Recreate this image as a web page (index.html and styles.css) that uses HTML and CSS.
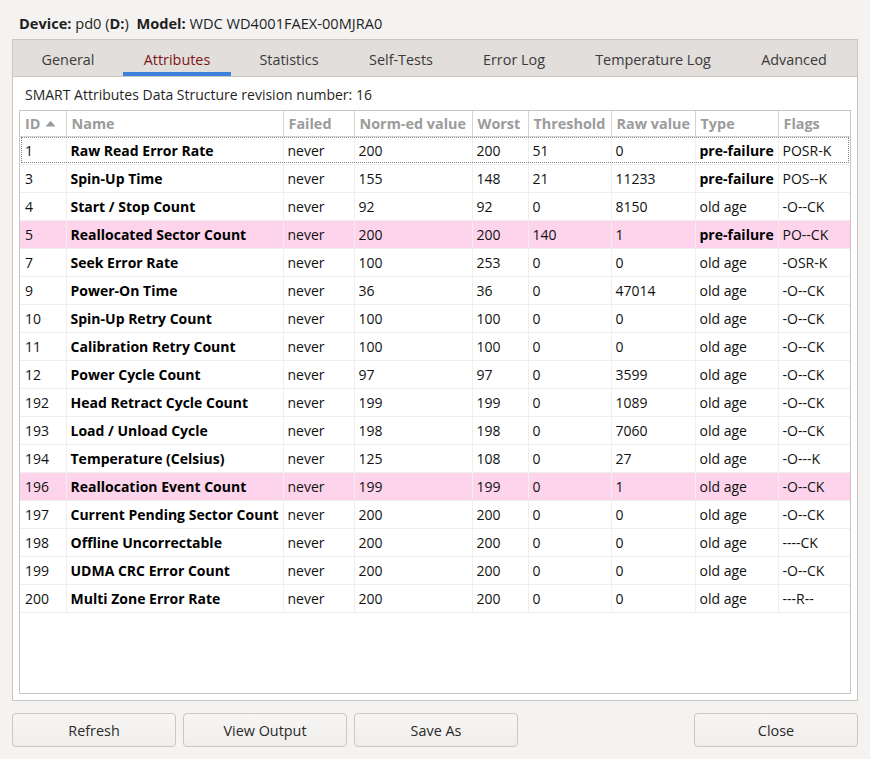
FILE: index.html
```html
<!DOCTYPE html>
<html>
<head>
<meta charset="utf-8">
<link rel="stylesheet" href="styles.css">
</head>
<body>
<div class="window">
  <div class="devline"><b>Device:</b> pd0 (<b>D:</b>)&nbsp; <b>Model:</b> WDC WD4001FAEX-00MJRA0</div>
  <div class="notebook">
    <div class="tabs">
      <div class="tab t1">General</div>
      <div class="tab t2 active">Attributes</div>
      <div class="tab t3">Statistics</div>
      <div class="tab t4">Self-Tests</div>
      <div class="tab t5">Error Log</div>
      <div class="tab t6">Temperature Log</div>
      <div class="tab t7">Advanced</div>
    </div>
    <div class="page">
      <div class="revision">SMART Attributes Data Structure revision number: 16</div>
      <div class="tablebox">
        <table class="attrs">
          <colgroup>
            <col class="c-id"><col class="c-name"><col class="c-failed"><col class="c-norm"><col class="c-worst"><col class="c-thr"><col class="c-raw"><col class="c-type"><col class="c-flags">
          </colgroup>
          <thead>
            <tr><th>ID <svg class="sort" width="11" height="7" viewBox="0 0 11 7"><path d="M0.5 6.5 L5.5 0.8 L10.5 6.5 Z" fill="#9b9b9b"/></svg></th><th>Name</th><th>Failed</th><th>Norm-ed value</th><th>Worst</th><th>Threshold</th><th>Raw value</th><th>Type</th><th>Flags</th></tr>
          </thead>
          <tbody>
            <tr class="focus"><td>1</td><td class="nm">Raw Read Error Rate</td><td>never</td><td>200</td><td>200</td><td>51</td><td>0</td><td class="pf">pre-failure</td><td>POSR-K</td></tr>
            <tr><td>3</td><td class="nm">Spin-Up Time</td><td>never</td><td>155</td><td>148</td><td>21</td><td>11233</td><td class="pf">pre-failure</td><td>POS--K</td></tr>
            <tr><td>4</td><td class="nm">Start / Stop Count</td><td>never</td><td>92</td><td>92</td><td>0</td><td>8150</td><td>old age</td><td>-O--CK</td></tr>
            <tr class="warn"><td>5</td><td class="nm">Reallocated Sector Count</td><td>never</td><td>200</td><td>200</td><td>140</td><td>1</td><td class="pf">pre-failure</td><td>PO--CK</td></tr>
            <tr><td>7</td><td class="nm">Seek Error Rate</td><td>never</td><td>100</td><td>253</td><td>0</td><td>0</td><td>old age</td><td>-OSR-K</td></tr>
            <tr><td>9</td><td class="nm">Power-On Time</td><td>never</td><td>36</td><td>36</td><td>0</td><td>47014</td><td>old age</td><td>-O--CK</td></tr>
            <tr><td>10</td><td class="nm">Spin-Up Retry Count</td><td>never</td><td>100</td><td>100</td><td>0</td><td>0</td><td>old age</td><td>-O--CK</td></tr>
            <tr><td>11</td><td class="nm">Calibration Retry Count</td><td>never</td><td>100</td><td>100</td><td>0</td><td>0</td><td>old age</td><td>-O--CK</td></tr>
            <tr><td>12</td><td class="nm">Power Cycle Count</td><td>never</td><td>97</td><td>97</td><td>0</td><td>3599</td><td>old age</td><td>-O--CK</td></tr>
            <tr><td>192</td><td class="nm">Head Retract Cycle Count</td><td>never</td><td>199</td><td>199</td><td>0</td><td>1089</td><td>old age</td><td>-O--CK</td></tr>
            <tr><td>193</td><td class="nm">Load / Unload Cycle</td><td>never</td><td>198</td><td>198</td><td>0</td><td>7060</td><td>old age</td><td>-O--CK</td></tr>
            <tr><td>194</td><td class="nm">Temperature (Celsius)</td><td>never</td><td>125</td><td>108</td><td>0</td><td>27</td><td>old age</td><td>-O---K</td></tr>
            <tr class="warn"><td>196</td><td class="nm">Reallocation Event Count</td><td>never</td><td>199</td><td>199</td><td>0</td><td>1</td><td>old age</td><td>-O--CK</td></tr>
            <tr><td>197</td><td class="nm">Current Pending Sector Count</td><td>never</td><td>200</td><td>200</td><td>0</td><td>0</td><td>old age</td><td>-O--CK</td></tr>
            <tr><td>198</td><td class="nm">Offline Uncorrectable</td><td>never</td><td>200</td><td>200</td><td>0</td><td>0</td><td>old age</td><td>----CK</td></tr>
            <tr><td>199</td><td class="nm">UDMA CRC Error Count</td><td>never</td><td>200</td><td>200</td><td>0</td><td>0</td><td>old age</td><td>-O--CK</td></tr>
            <tr><td>200</td><td class="nm">Multi Zone Error Rate</td><td>never</td><td>200</td><td>200</td><td>0</td><td>0</td><td>old age</td><td>---R--</td></tr>
          </tbody>
        </table>
      </div>
    </div>
  </div>
  <div class="buttons">
    <button class="btn">Refresh</button>
    <button class="btn">View Output</button>
    <button class="btn">Save As</button>
    <span class="spacer"></span>
    <button class="btn">Close</button>
  </div>
</div>
</body>
</html>
```

FILE: styles.css
```css
* { box-sizing: border-box; }
html, body { margin: 0; padding: 0; }
body {
  background: #f4f3f2;
  font-family: "Open Sans", "Noto Sans", sans-serif;
  font-size: 14px;
  color: #1a1a1a;
  width: 870px;
  height: 759px;
  overflow: hidden;
}
.window {
  display: flex;
  flex-direction: column;
  padding: 0 12px 0 12px;
  height: 759px;
}
.devline {
  height: 39px;
  padding: 13px 0 0 7px;
  font-size: 14.6px;
  color: #1f1f1f;
  line-height: 20px;
}
.devline b { font-weight: 700; }
.notebook {
  width: 846px;
  height: 662px;
  border: 1px solid #c9c5c1;
  display: flex;
  flex-direction: column;
}
.tabs {
  height: 37px;
  background: #e1dedb;
  border-bottom: 1px solid #cbc7c3;
  display: flex;
  position: relative;
}
.tab {
  height: 36px;
  line-height: 36px;
  padding-top: 2px;
  text-align: center;
  color: #3a3a3a;
  font-size: 14.4px;
}
.t1 { width: 110px; }
.t2 { width: 108px; }
.t3 { width: 116px; }
.t4 { width: 108px; }
.t5 { width: 118px; }
.t6 { width: 160px; }
.t7 { width: 122px; }
.tab.active {
  color: #7c1616;
  box-shadow: inset 0 -4px 0 #3b82db;
}
.page {
  flex: 1;
  background: #ffffff;
  padding: 0 6px 6px 6px;
  display: flex;
  flex-direction: column;
}
.revision {
  height: 33px;
  line-height: 20px;
  padding: 8px 0 0 6px;
  color: #1f1f1f;
}
.tablebox {
  flex: 1;
  border: 1px solid #c9c5c1;
  overflow: hidden;
}
.attrs {
  border-collapse: collapse;
  table-layout: fixed;
  width: 830px;
}
.c-id { width: 46px; }
.c-name { width: 217px; }
.c-failed { width: 71px; }
.c-norm { width: 118px; }
.c-worst { width: 56px; }
.c-thr { width: 83px; }
.c-raw { width: 84px; }
.c-type { width: 83px; }
.c-flags { width: 72px; }
.attrs th {
  height: 25px;
  text-align: left;
  font-weight: 700;
  font-size: 14.4px;
  color: #9b9b9b;
  padding: 0 0 0 5px;
  border-right: 1px solid #d6d3d0;
  border-bottom: 1px solid #d6d3d0;
  white-space: nowrap;
  overflow: hidden;
}
.attrs th:first-child { padding-left: 5px; }
.attrs th:last-child { border-right: none; }
.sort { margin-left: 1px; vertical-align: 2px; }
.attrs td {
  height: 28px;
  padding: 0 0 0 4px;
  color: #111;
  border-right: 1px solid #f0efee;
  border-bottom: 1px solid #f0efee;
  white-space: nowrap;
  overflow: hidden;
}
.attrs td:first-child { padding-left: 5px; }
.attrs td:last-child { border-right: none; }
.attrs td.nm { font-weight: 700; color: #000; }
.attrs td.pf { font-weight: 700; color: #000; }
.attrs tr.warn td { background: #fdd4eb; }
.attrs tr.focus { outline: 1px dotted #8a8a8a; outline-offset: -2px; }
.buttons {
  display: flex;
  gap: 7px;
  padding-top: 12px;
  padding-left: 0;
}
.spacer { flex: 1; }
.btn {
  width: 164px;
  height: 34px;
  border: 1px solid #cbc7c3;
  border-radius: 4px;
  background: linear-gradient(#f7f6f5, #efeeec);
  font-family: "Open Sans", "Noto Sans", sans-serif;
  font-size: 14.4px;
  color: #2a2a2a;
  padding: 0;
}
```
